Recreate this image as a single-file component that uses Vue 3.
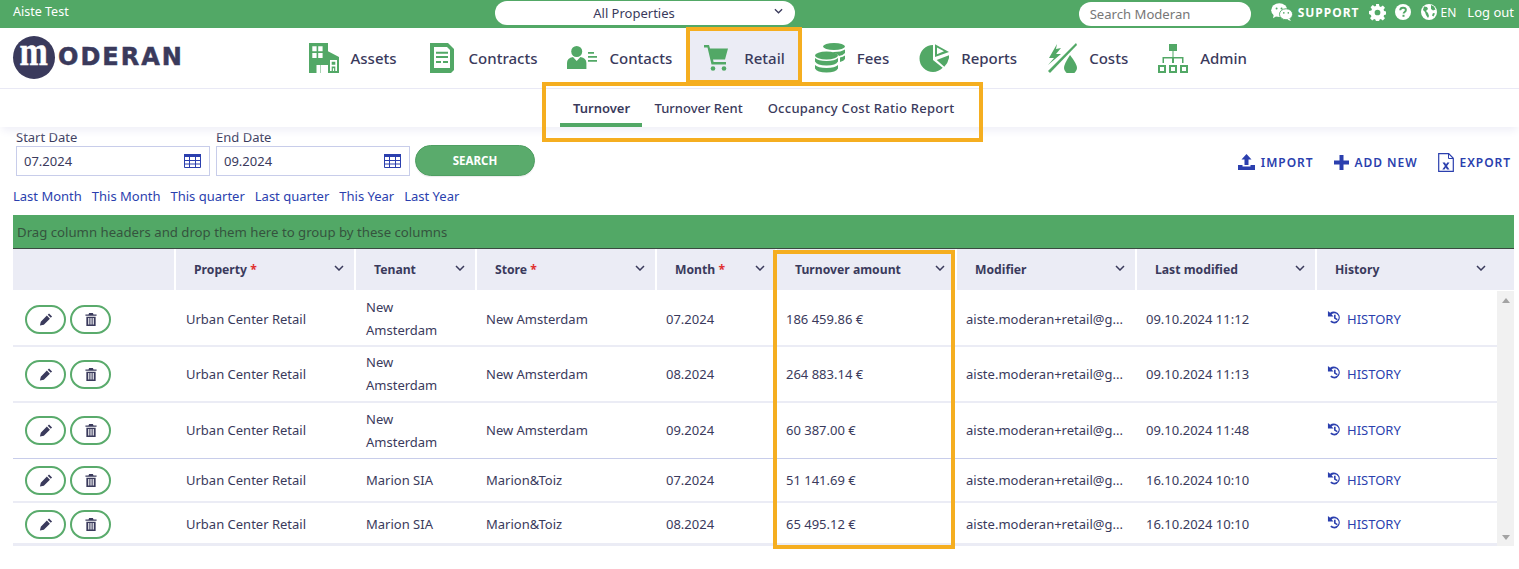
<script setup>
const navItems = [
  { label: 'Assets', icon: 'assets' },
  { label: 'Contracts', icon: 'contracts' },
  { label: 'Contacts', icon: 'contacts' },
  { label: 'Retail', icon: 'retail', active: true },
  { label: 'Fees', icon: 'fees' },
  { label: 'Reports', icon: 'reports' },
  { label: 'Costs', icon: 'costs' },
  { label: 'Admin', icon: 'admin' }
]
const subItems = [
  { label: 'Turnover', active: true },
  { label: 'Turnover Rent' },
  { label: 'Occupancy Cost Ratio Report' }
]
const quick = ['Last Month', 'This Month', 'This quarter', 'Last quarter', 'This Year', 'Last Year']
const columns = [
  { label: 'Property', req: true },
  { label: 'Tenant' },
  { label: 'Store', req: true },
  { label: 'Month', req: true },
  { label: 'Turnover amount' },
  { label: 'Modifier' },
  { label: 'Last modified' },
  { label: 'History' }
]
const mail = 'aiste.moderan+retail@g...'
const rows = [
  { tenant: 'New Amsterdam', store: 'New Amsterdam', month: '07.2024', amount: '186 459.86 €', modified: '09.10.2024 11:12', tall: true, edge: true },
  { tenant: 'New Amsterdam', store: 'New Amsterdam', month: '08.2024', amount: '264 883.14 €', modified: '09.10.2024 11:13', tall: true },
  { tenant: 'New Amsterdam', store: 'New Amsterdam', month: '09.2024', amount: '60 387.00 €', modified: '09.10.2024 11:48', tall: true, strong: true },
  { tenant: 'Marion SIA', store: 'Marion&Toiz', month: '07.2024', amount: '51 141.69 €', modified: '16.10.2024 10:10' },
  { tenant: 'Marion SIA', store: 'Marion&Toiz', month: '08.2024', amount: '65 495.12 €', modified: '16.10.2024 10:10', last: true, edge: true }
]
</script>

<template>
  <div class="page">
    <header class="topbar">
      <span class="user">Aiste Test</span>
      <div class="prop-select">
        <span>All Properties</span>
        <svg class="chev-small" viewBox="0 0 10 6"><path d="M1 1l4 4 4-4" fill="none" stroke="#3a3a5c" stroke-width="1.4" /></svg>
      </div>
      <div class="top-right">
        <div class="search-pill">Search Moderan</div>
        <svg class="ti wechat" viewBox="0 0 24 20">
          <ellipse cx="9" cy="8" rx="9" ry="7.6" fill="#fff" />
          <path d="M3 12l-1 5 5-3z" fill="#fff" />
          <ellipse cx="16.5" cy="12.5" rx="7.3" ry="6.1" fill="#fff" stroke="#52a866" stroke-width="1" />
          <path d="M20 17l2 3-4-1.5z" fill="#fff" />
          <circle cx="6" cy="6" r="1.1" fill="#52a866" /><circle cx="11.5" cy="6" r="1.1" fill="#52a866" />
          <circle cx="14" cy="11" r=".9" fill="#52a866" /><circle cx="19" cy="11" r=".9" fill="#52a866" />
        </svg>
        <span class="support">SUPPORT</span>
        <svg class="ti gear" viewBox="0 0 16 16">
          <path fill="#fff" fill-rule="evenodd" d="M6.6 0h2.8l.4 2.2 1.3.6 1.9-1.3 2 2-1.3 1.9.6 1.3 2.2.4v2.8l-2.2.4-.6 1.3 1.3 1.9-2 2-1.9-1.3-1.3.6-.4 2.2H6.6l-.4-2.2-1.3-.6-1.9 1.3-2-2 1.3-1.9-.6-1.3L0 9.4V6.6l2.2-.4.6-1.3L1.500 3l2-2 1.900 1.300 1.300-.6zM8 5.300a2.700 2.700 0 100 5.400 2.700 2.700 0 000-5.400z" />
        </svg>
        <svg class="ti help" viewBox="0 0 16 16">
          <circle cx="8" cy="8" r="8" fill="#fff" />
          <path d="M5.200 6.200C5.300 4.500 6.500 3.700 8 3.700c1.700 0 2.900 1 2.900 2.300 0 2-2.300 2-2.300 3.600" fill="none" stroke="#52a866" stroke-width="1.900" />
          <rect x="7.500" y="10.800" width="2" height="2" fill="#52a866" />
        </svg>
        <svg class="ti globe" viewBox="0 0 16 16">
          <circle cx="8" cy="8" r="8" fill="#fff" />
          <path d="M3 2.500l3 .5 1 2-2 2 2 2 1 3-1 2-2-3-1-3-2-2zM10 1l3 1.500 1.500 3-2.500 1-2-1.500zM12 9l2 .5-1.500 3-1.500-1z" fill="#52a866" />
        </svg>
        <span class="lang">EN</span>
        <span class="logout">Log out</span>
      </div>
    </header>

    <div class="mainbar">
      <div class="logo">
        <span class="logo-mark"><span>m</span></span>
        <span class="logo-text">ODERAN</span>
      </div>
      <nav class="nav">
        <a v-for="n in navItems" :key="n.label" class="nav-item" :class="{ active: n.active }">
          <svg class="nav-icon" viewBox="0 0 30 30">
            <g v-if="n.icon === 'assets'" fill="#52a866">
              <path fill-rule="evenodd" d="M0 0h19v8.300L30 14v16H19v-8h-7.500v8H7.500v-8H12v8H0zM3.300 3.300v5h4.300v-5zm5.900 0v5h4.400v-5zM3.300 10v5h4.300v-5zm5.900 0v5h4.400v-5zM21 17v11h7V17zm1.700 1.700h3.600v3h-3.600zm0 4.800h3.600v4.500h-1.200v-2.800h-1.200V28h-1.200z" />
            </g>
            <g v-else-if="n.icon === 'contracts'">
              <path d="M3 0h18l6 6v21l-3 3H3z" fill="#52a866" />
              <path d="M7 4h13l3 3v18H7z" fill="#fff" />
              <path d="M9 8.800h12v2H9zM9 13h12v2H9zM9 18h5v2H9zM16 18h5v2h-5z" fill="#52a866" />
            </g>
            <g v-else-if="n.icon === 'contacts'" fill="#52a866">
              <circle cx="9.700" cy="8.500" r="5.500" />
              <path d="M0 26v-6q0-5 6-6l3.700 4 3.700-4q6 1 6 6v6z" />
              <path d="M21 9h6v1.700h-6zM21 13h9v1.700h-9zM21 17h9v1.700h-9z" />
            </g>
            <g v-else-if="n.icon === 'retail'" fill="#52a866">
              <path d="M2 2h5l1 3.500h18l-3 11H11l.6 2.500H24v2.500H9.500L5.500 4.500H2z" />
              <circle cx="11" cy="25.500" r="2.300" /><circle cx="22" cy="25.500" r="2.300" />
            </g>
            <g v-else-if="n.icon === 'fees'" fill="#52a866">
              <ellipse cx="19" cy="3.500" rx="11" ry="3.500" />
              <path d="M19 9q7 0 11-2.500V10q-2 2.500-6 3-2-3-7-3.500zM25 14.500q3-.5 5-2V16q-1 2-5 3z" />
              <ellipse cx="11.500" cy="12.500" rx="11.500" ry="4" />
              <path d="M0 15q3 3 11.500 3T23 15v3.500q-2 4-11.500 4T0 18.500zM0 22q3 3 11.500 3T23 22v3.500q-2 4-11.500 4T0 25.500z" />
            </g>
            <g v-else-if="n.icon === 'reports'" fill="#52a866">
              <path d="M14 2v15l9.700 7.700A14.500 14.500 0 0114 29 13.500 13.500 0 0114 2z" />
              <path fill-rule="evenodd" d="M16 1.300L30 9 16 14zm2 3.300v6.600l7-3z" />
              <path d="M17.700 17L30 12.300V15q-1 5-4.700 8.700z" />
            </g>
            <g v-else-if="n.icon === 'costs'" fill="#52a866">
              <path d="M10 1l-8 14h5L1 22l13-11H9l5-6-5 1z" />
              <path d="M1 28L29 0l1 2L3 30z" />
              <path d="M23 12q7 9 7 13a6.500 6 0 01-13 0q0-4 6-13z" />
            </g>
            <g v-else fill="#52a866">
              <rect x="11" y="1" width="8" height="7" />
              <path d="M14.500 8h1v6h10v6h-1.500v-4.500h-8V20h-2v-4.500H6V20H4.500v-6h10z" />
              <path fill-rule="evenodd" d="M0 22h8v8H0zm2 2v4h4v-4zM11 22h8v8h-8zm2 2v4h4v-4zM22 22h8v8h-8zm2 2v4h4v-4z" />
            </g>
          </svg>
          <span>{{ n.label }}</span>
        </a>
      </nav>
    </div>

    <div class="subbar">
      <a v-for="s in subItems" :key="s.label" class="sub-item" :class="{ active: s.active }">{{ s.label }}</a>
    </div>

    <div class="filters">
      <div class="filter-left">
        <label class="field">
          <span class="field-label">Start Date</span>
          <span class="field-box">07.2024
            <svg class="cal" viewBox="0 0 17 14"><path d="M.5.500h16v13H.500z" fill="#fff" stroke="#2b3fae" /><path d="M0 0h17v3H0z" fill="#2b3fae" /><path d="M5.500 3v10M11.500 3v10M1 6.500h15M1 10h15" stroke="#2b3fae" fill="none" /></svg>
          </span>
        </label>
        <label class="field">
          <span class="field-label">End Date</span>
          <span class="field-box">09.2024
            <svg class="cal" viewBox="0 0 17 14"><path d="M.5.500h16v13H.500z" fill="#fff" stroke="#2b3fae" /><path d="M0 0h17v3H0z" fill="#2b3fae" /><path d="M5.500 3v10M11.500 3v10M1 6.500h15M1 10h15" stroke="#2b3fae" fill="none" /></svg>
          </span>
        </label>
        <button class="search-btn">SEARCH</button>
      </div>
      <div class="actions">
        <a class="action">
          <svg class="a-ic" viewBox="0 0 17 16"><path d="M8.500 0l5 5.500H10.500V11h-4V5.500H3.500z" fill="#2b3fae" /><path d="M0 11h4.500v1.500h8V11H17v5H0z" fill="#2b3fae" /></svg>
          IMPORT
        </a>
        <a class="action">
          <svg class="a-ic plus" viewBox="0 0 15 15"><path d="M5.500 0h4v5.500H15v4H9.500V15h-4V9.500H0v-4h5.500z" fill="#2b3fae" /></svg>
          ADD NEW
        </a>
        <a class="action">
          <svg class="a-ic xls" viewBox="0 0 16 19"><path d="M.7.700h10l4.600 4.600v13H.7z" fill="#fff" stroke="#2b3fae" stroke-width="1.200" /><path d="M10.500 1v4.500H15" fill="none" stroke="#2b3fae" /><path d="M4.500 9.500h2.500l1 2 1.200-2h2.300L9 13l2.500 3.500H9l-1.200-2-1.300 2H4.300L6.900 13z" fill="#2b3fae" /></svg>
          EXPORT
        </a>
      </div>
    </div>

    <div class="quick">
      <a v-for="q in quick" :key="q">{{ q }}</a>
    </div>

    <div class="grid">
      <div class="group-panel">Drag column headers and drop them here to group by these columns</div>
      <div class="head">
        <div class="hcell"></div>
        <div v-for="c in columns" :key="c.label" class="hcell">
          <span class="hlabel">{{ c.label }}<i v-if="c.req"> *</i></span>
          <svg class="chev" viewBox="0 0 10 6"><path d="M1 1l4 4 4-4" fill="none" stroke="#3a3a5c" stroke-width="1.500" /></svg>
        </div>
      </div>
      <div class="body">
        <div class="rows">
          <div v-for="r in rows" :key="r.month + r.tenant" class="row" :class="{ tall: r.tall, strong: r.strong, last: r.last, edge: r.edge }">
            <div class="cell btns">
              <button class="icon-btn">
                <svg viewBox="-.5 -.5 15 15"><path d="M10.500 0L14 3.500 12.500 5 9 1.500zM8 2.500l3.500 3.500-7 7L0 14l1-4.500z" fill="#3a3a5c" /></svg>
              </button>
              <button class="icon-btn">
                <svg viewBox="0 0 12 14"><path d="M4 0h4l.7 1.500H12V3H0V1.500h3.300z" fill="#3a3a5c" /><path fill-rule="evenodd" d="M1 4h10v10H1zm2 1.500v7h1.200v-7zm2.400 0v7h1.200v-7zm2.400 0v7H9v-7z" fill="#3a3a5c" /></svg>
              </button>
            </div>
            <div class="cell">Urban Center Retail</div>
            <div class="cell wrap">{{ r.tenant }}</div>
            <div class="cell">{{ r.store }}</div>
            <div class="cell">{{ r.month }}</div>
            <div class="cell">{{ r.amount }}</div>
            <div class="cell">{{ mail }}</div>
            <div class="cell">{{ r.modified }}</div>
            <div class="cell hist">
              <svg viewBox="0 0 16 16"><path d="M3.300 2.800A6.500 6.500 0 118 14.500a6.500 6.500 0 01-4.600-1.900l1.500-1.500A4.400 4.400 0 108 3.600a4.300 4.300 0 00-3.100 1.300L7 7H1V1z" fill="#2b3fae" /><path d="M7.500 5h1.700v3.300l2.200 1.300-.8 1.300-3.100-1.800z" fill="#2b3fae" /></svg>
              <a>HISTORY</a>
            </div>
          </div>
        </div>
        <div class="scroll">
          <span class="arrow up"></span>
          <span class="arrow down"></span>
        </div>
      </div>
    </div>

    <div class="mark mark-retail"></div>
    <div class="mark mark-sub"></div>
    <div class="mark mark-col"></div>
  </div>
</template>

<style>
html, body { margin: 0; background: #fff; }
</style>

<style scoped>
.page {
  position: relative;
  width: 1519px;
  height: 569px;
  overflow: hidden;
  background: #fff;
  font-family: "Noto Sans", "Open Sans", sans-serif;
  font-size: 13px;
  color: #3a3a5c;
}
.topbar {
  display: flex;
  align-items: center;
  height: 28px;
  background: #52a866;
  color: #fff;
  padding: 0 5px 0 13px;
  box-sizing: border-box;
}
.user { width: 482px; font-size: 12.5px; line-height: 24px; align-self: flex-start; }
.prop-select {
  position: relative;
  display: flex;
  justify-content: center;
  align-items: center;
  width: 300px;
  height: 24px;
  margin-top: -3px;
  border-radius: 12px;
  background: #fff;
  color: #3a3a5c;
  padding-right: 22px;
  box-sizing: border-box;
}
.chev-small { position: absolute; right: 12px; top: 7px; width: 9px; height: 6px; }
.top-right { margin-left: auto; display: flex; align-items: center; height: 24px; align-self: flex-start; }
.search-pill {
  width: 172px;
  height: 24px;
  margin: 3px 20px 0 0;
  padding-left: 11px;
  box-sizing: border-box;
  border-radius: 12px;
  background: #fff;
  color: #777;
  font-size: 13.1px;
  line-height: 24px;
}
.ti { display: block; }
.wechat { width: 22px; height: 18px; margin-right: 5px; }
.support { font-weight: 700; font-size: 12px; letter-spacing: 1px; margin-right: 9px; }
.gear, .help, .globe { width: 16px; height: 16px; }
.gear { margin-right: 9px; width: 17px; height: 17px; }
.help { margin-right: 10px; }
.globe { margin-right: 4px; }
.lang { font-size: 12px; margin-right: 11px; }
.logout { font-size: 13px; }

.mainbar {
  display: flex;
  height: 60px;
  border-bottom: 1px solid #e9e9f5;
  box-sizing: content-box;
}
.logo { display: flex; align-items: center; width: 293.5px; padding-left: 13px; box-sizing: border-box; height: 58px; }
.logo-mark {
  display: flex;
  align-items: center;
  justify-content: center;
  flex: none;
  width: 42px;
  height: 43px;
  border-radius: 50%;
  background: #3a3a5c;
  color: #fff;
  font-family: "Liberation Serif", serif;
  font-weight: 700;
  font-size: 40px;
  line-height: 38px;
}
.logo-mark span { margin-top: -10px; transform: scaleX(.85); -webkit-text-stroke: .5px #fff; }
.logo-text {
  margin-left: 3px;
  font-family: "DejaVu Sans", sans-serif;
  font-weight: 700;
  font-size: 24px;
  letter-spacing: 2px;
  color: #3a3a5c;
  -webkit-text-stroke: .5px #3a3a5c;
}
.nav { display: flex; }
.nav-item {
  display: flex;
  align-items: center;
  gap: 12px;
  height: 60px;
  padding: 0 15px;
  font-size: 15px;
  font-weight: 500;
  color: #3a3a5c;
  box-sizing: border-box;
}
.nav-item.active { background: linear-gradient(#ebecf5, #ebecf5) top / 100% 58px no-repeat; }
.nav-icon { width: 30px; height: 30px; display: block; }

.subbar {
  display: flex;
  justify-content: flex-start;
  height: 38px;
  padding-left: 560px;
  background: #fff;
  box-shadow: 0 6px 8px -2px #f0f0f8;
  box-sizing: border-box;
  position: relative;
}
.sub-item {
  padding: 0 12.5px;
  line-height: 38px;
  height: 38px;
  box-sizing: border-box;
  font-size: 13px;
  font-weight: 500;
  color: #3a3a5c;
}
.sub-item.active { border-bottom: 4px solid #52a866; font-weight: 600; width: 82px; padding: 0 13px; }
.sub-item:last-child { letter-spacing: .26px; }

.filters { display: flex; justify-content: space-between; padding: 2px 8px 0 16px; height: 49px; box-sizing: border-box; }
.filter-left { display: flex; align-items: flex-end; gap: 6px; }
.field { display: flex; flex-direction: column; width: 194px; }
.field-label { font-size: 13px; line-height: 17px; }
.field-box {
  display: flex;
  align-items: center;
  justify-content: space-between;
  height: 30px;
  padding: 0 8px 0 7px;
  box-sizing: border-box;
  border: 1px solid #c8cdea;
  font-size: 13px;
}
.cal { width: 17px; height: 14px; }
.search-btn {
  width: 120px;
  height: 31px;
  margin: 0 0 0 -1px;
  border: 1px solid #4f9f62;
  border-radius: 16px;
  background: #5aab6c;
  color: #fff;
  font-family: inherit;
  font-size: 11.5px;
  font-weight: 700;
  box-shadow: 0 1px 1px rgba(0,0,0,.08);
}
.actions { display: flex; gap: 20px; align-items: center; padding-top: 19px; }
.action {
  display: flex;
  align-items: center;
  gap: 6px;
  font-size: 12px;
  font-weight: 600;
  letter-spacing: .95px;
  color: #2b3fae;
}
.a-ic { width: 17px; height: 16px; }
.plus { width: 15px; height: 15px; }
.xls { width: 16px; height: 19px; }

.quick { display: flex; gap: 10px; padding: 11px 0 0 13px; height: 27px; line-height: 18px; color: #2b3fae; font-size: 13px; box-sizing: border-box; }

.grid { margin: 12px 5px 0 13px; }
.group-panel {
  height: 33px;
  background: #52a866;
  border-bottom: 1px solid #3a4a40;
  color: #35543e;
  font-size: 13.2px;
  line-height: 34px;
  padding-left: 4px;
}
.head { display: grid; grid-template-columns: 163px 180px 121px 180px 120px 180px 180px 180px 197px; height: 41px; margin-bottom: 1px; }
.hcell {
  display: flex;
  align-items: center;
  justify-content: space-between;
  background: #ebecf5;
  border-right: 2px solid #fff;
  padding: 0 10px 0 18px;
  box-sizing: border-box;
  font-weight: 700;
  font-size: 12.2px;
}
.hcell:last-child { border-right: 0; padding-right: 28px; }
.hlabel i { color: #e03030; font-style: normal; }
.chev { width: 10px; height: 6px; margin-top: -3px; }
.body { display: flex; }
.rows { width: 1484px; }
.row { display: grid; grid-template-columns: 163px 180px 120px 180px 120px 180px 180px 180px 161px; height: 44px; border-bottom: 2px solid #ebecf5; box-sizing: border-box; }
.row.tall { height: 56px; }
.row.strong { border-bottom-color: #c8cdea; border-bottom-width: 1px; }
.row.last { height: 43px; border-bottom-width: 3px; }
.cell {
  display: flex;
  align-items: center;
  padding: 0 10px;
  box-sizing: border-box;
  font-size: 13px;
  line-height: 23px;
  overflow: hidden;
  white-space: nowrap;
}
.row.edge .cell { padding-top: 2px; }
.cell.wrap { white-space: normal; }
.btns { gap: 4px; padding-left: 12px; }
.icon-btn {
  display: flex;
  align-items: center;
  justify-content: center;
  width: 41px;
  height: 29px;
  padding: 0;
  border: 2px solid #5aab6c;
  border-radius: 15px;
  background: #fff;
}
.icon-btn svg { height: 13px; width: 14px; }
.hist { gap: 5px; color: #2b3fae; padding-left: 11px; }
.hist svg { width: 15px; height: 15px; margin-top: -3px; }
.scroll {
  position: relative;
  width: 17px;
  height: 255px;
  background: #f1f1f1;
}
.arrow { position: absolute; left: 5px; border-left: 4px solid transparent; border-right: 4px solid transparent; }
.up { top: 7px; border-bottom: 5px solid #a3a3a3; }
.down { bottom: 6px; border-top: 5px solid #a3a3a3; }

.mark { position: absolute; border: 4px solid #f5ae20; box-sizing: border-box; pointer-events: none; }
.mark-retail { left: 686px; top: 27px; width: 116px; height: 57px; }
.mark-sub { left: 542px; top: 82px; width: 441px; height: 60px; }
.mark-col { left: 773px; top: 250px; width: 182px; height: 299px; }
</style>
